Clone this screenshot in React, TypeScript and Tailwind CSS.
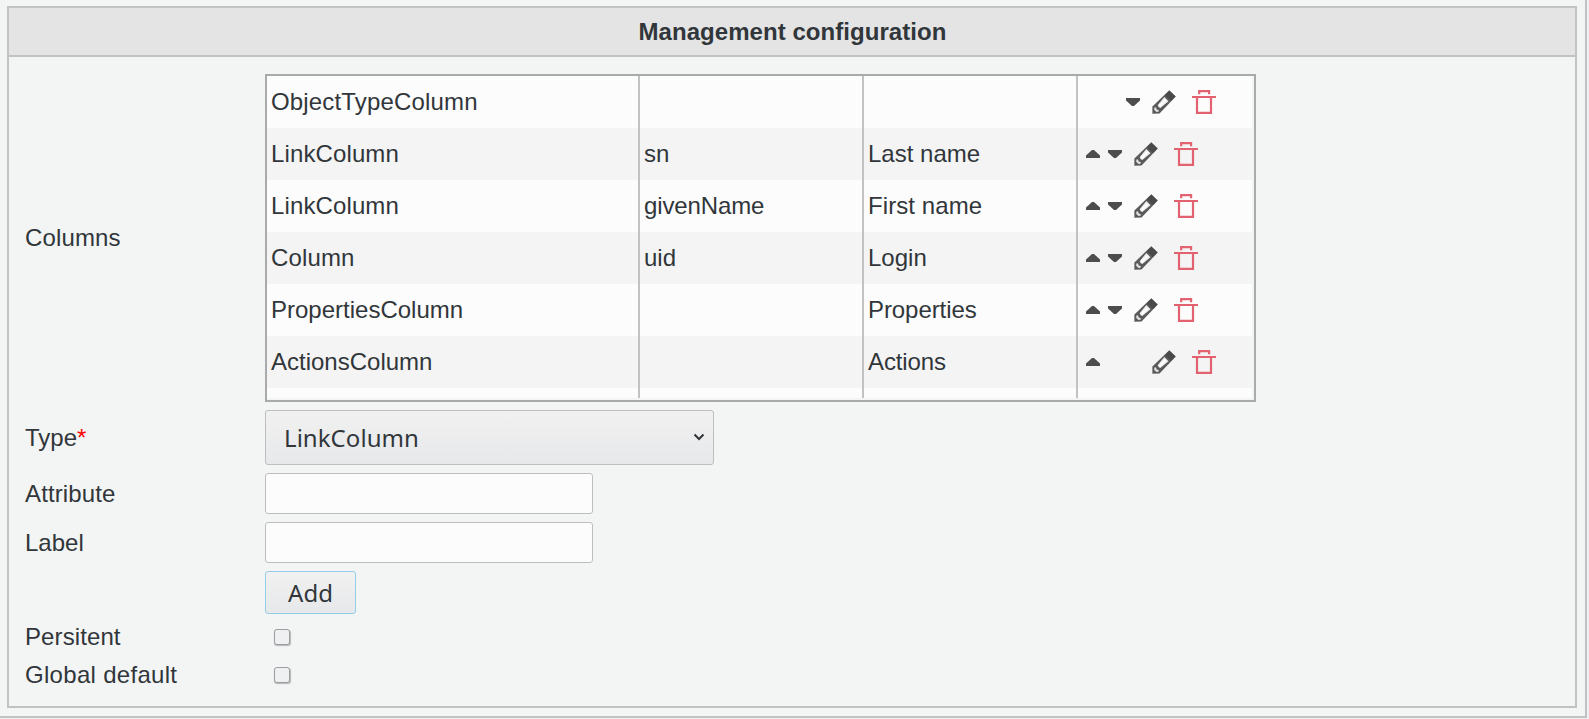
import type { ReactNode } from "react";

type Column = {
  type: string;
  typeClass: string;
  attribute: string;
  attributeClass?: string;
  label: string;
  labelClass?: string;
  up: boolean;
  down: boolean;
};

const columns: Column[] = [
  { type: "ObjectTypeColumn", typeClass: "tracking-[0.16px]", attribute: "", label: "", up: false, down: true },
  { type: "LinkColumn", typeClass: "tracking-[0.12px]", attribute: "sn", label: "Last name", up: true, down: true },
  { type: "LinkColumn", typeClass: "tracking-[0.12px]", attribute: "givenName", attributeClass: "tracking-[-0.12px]", label: "First name", labelClass: "tracking-[0.08px]", up: true, down: true },
  { type: "Column", typeClass: "tracking-[0.15px]", attribute: "uid", label: "Login", up: true, down: true },
  { type: "PropertiesColumn", typeClass: "", attribute: "", label: "Properties", labelClass: "tracking-[-0.08px]", up: true, down: true },
  { type: "ActionsColumn", typeClass: "", attribute: "", label: "Actions", labelClass: "tracking-[-0.12px]", up: true, down: false },
];

function UpIcon() {
  return (
    <svg className="h-2 w-3.5" viewBox="0 0 14 8" fill="#4d4d4d">
      <path d="M6 0h2L14 5.500V8H0V5.500z" />
    </svg>
  );
}

function DownIcon() {
  return (
    <svg className="h-2 w-3.5" viewBox="0 0 14 8" fill="#4d4d4d">
      <path d="M6 8h2L14 2.500V0H0v2.500z" />
    </svg>
  );
}

function PencilIcon() {
  return (
    <svg className="size-6" viewBox="0 0 24 24">
      <path d="M.4 16.400 17.300.2 23.800 6.400 7.500 23.600 .4 23.800z" fill="#5a5a5a" />
      <path d="M17.300.7 23.400 6.400 19 11 13 5z" fill="#4a4a4a" />
      <path d="M5.600 15.200 12.300 7l4.200 4.200-8.200 6.900-1.500-.8z" fill="#ededed" />
      <path d="M7.400 16.200 13.800 9.800" stroke="#fff" strokeWidth="2" />
      <path d="M2.300 17.600h1.900l.4 1.900 2 .5.200 1.600-2.300.3-2.200-2z" fill="#e4e4e4" />
    </svg>
  );
}

function TrashIcon() {
  return (
    <svg className="size-6" viewBox="0 0 24 24" fill="none" stroke="#e2636f" strokeWidth="2.200">
      <path d="M7.200 4.300V1.100h9.900v3.200M0 7h24M5 8.100v14.800h14V8.100" />
    </svg>
  );
}

type RowProps = {
  label: string;
  labelClass?: string;
  required?: boolean;
  className: string;
  children: ReactNode;
};

function Row({ label, labelClass = "", required, className, children }: RowProps) {
  return (
    <div className={`flex items-center ${className}`}>
      <div className={`w-60 shrink-0 ${labelClass}`}>
        {label}
        {required && <span className="text-[#ff0000]">*</span>}
      </div>
      {children}
    </div>
  );
}

function Checkbox() {
  return (
    <input
      type="checkbox"
      className="ml-[9px] size-4 appearance-none rounded-[3px] border border-[#9b9ea1] bg-[#eff0f1] shadow-[0.5px_1px_1px_rgba(0,0,0,0.25)]"
    />
  );
}

export default function App() {
  return (
    <div className="h-[719px] w-[1589px] overflow-hidden bg-[#eff0f1] font-['Liberation_Sans',Arial,sans-serif] text-[24px] leading-7 text-[#31363b]">
      <div className="h-[718px] w-[1587px] border-r-2 border-b-2 border-[#c1c3c2] bg-[#f3f5f4] pt-1.5 pl-[7px]">
        <section className="h-[702px] w-[1570px] border-2 border-[#c1c3c2]">
          <h2 className="flex h-[49px] items-center justify-center border-b-2 border-[#c1c3c2] bg-[#e4e4e4] pl-px font-bold tracking-[0.05px]">
            Management configuration
          </h2>
          <div className="pt-[13px] pl-4">
            <Row label="Columns" labelClass="tracking-[0.15px]" className="h-[336px]">
              <div className="h-[328px] w-[991px] border-2 border-[#a9abaa]">
                <table className="w-[985px] table-fixed border-separate border-spacing-0 bg-[#fcfcfc]">
                  <colgroup>
                    <col className="w-[373px]" />
                    <col className="w-[224px]" />
                    <col className="w-[214px]" />
                    <col className="w-[174px]" />
                  </colgroup>
                  <tbody>
                    {columns.map((c, i) => (
                      <tr key={i} className="h-[52px] even:bg-[#f4f4f4]">
                        <td className={`border-r-2 border-[#c1c3c2] p-0 pl-1 ${c.typeClass}`}>{c.type}</td>
                        <td className={`border-r-2 border-[#c1c3c2] p-0 pl-1 ${c.attributeClass ?? ""}`}>{c.attribute}</td>
                        <td className={`border-r-2 border-[#c1c3c2] p-0 pl-1 ${c.labelClass ?? ""}`}>{c.label}</td>
                        <td className="p-0 pl-2">
                          <div className="flex items-center">
                            {c.up ? <UpIcon /> : <span className="w-8" />}
                            <span className="w-2" />
                            {c.down ? <DownIcon /> : <span className="w-8" />}
                            <span className="w-3" />
                            <PencilIcon />
                            <span className="w-4" />
                            <TrashIcon />
                          </div>
                        </td>
                      </tr>
                    ))}
                    <tr className="h-2.5">
                      <td className="border-r-2 border-[#c1c3c2] p-0" />
                      <td className="border-r-2 border-[#c1c3c2] p-0" />
                      <td className="border-r-2 border-[#c1c3c2] p-0" />
                      <td className="p-0" />
                    </tr>
                  </tbody>
                </table>
              </div>
            </Row>
            <Row label="Type" required className="h-[63px]">
              <button className="flex h-[55px] w-[449px] items-center justify-between rounded-[3px] border border-[#bcbebf] bg-linear-to-b from-[#f1f1f1] to-[#e7e8ea] pr-2 pl-[18px] font-['Noto_Sans',sans-serif] tracking-[0.05px]">
                LinkColumn
                <svg className="mb-0.5 h-2 w-3" viewBox="0 0 12 8" fill="none" stroke="#31363b" strokeWidth="2">
                  <path d="M1.5 1.5 6 6l4.500-4.500" />
                </svg>
              </button>
            </Row>
            <Row label="Attribute" labelClass="tracking-[0.12px]" className="h-[49px]">
              <input className="h-[41px] w-[328px] rounded-[3px] border border-[#bcbebf] bg-[#fcfcfc]" />
            </Row>
            <Row label="Label" className="h-[49px]">
              <input className="h-[41px] w-[328px] rounded-[3px] border border-[#bcbebf] bg-[#fcfcfc]" />
            </Row>
            <Row label="" className="h-[51px]">
              <button className="h-[43px] w-[91px] rounded-[3px] border border-[#93cee9] bg-linear-to-b from-[#f1f1f1] to-[#e7e8ea] font-['Noto_Sans',sans-serif]">
                Add
              </button>
            </Row>
            <Row label="Persitent" labelClass="tracking-[0.1px]" className="h-[38px]">
              <Checkbox />
            </Row>
            <Row label="Global default" labelClass="tracking-[0.3px]" className="h-[38px]">
              <Checkbox />
            </Row>
          </div>
        </section>
      </div>
    </div>
  );
}
